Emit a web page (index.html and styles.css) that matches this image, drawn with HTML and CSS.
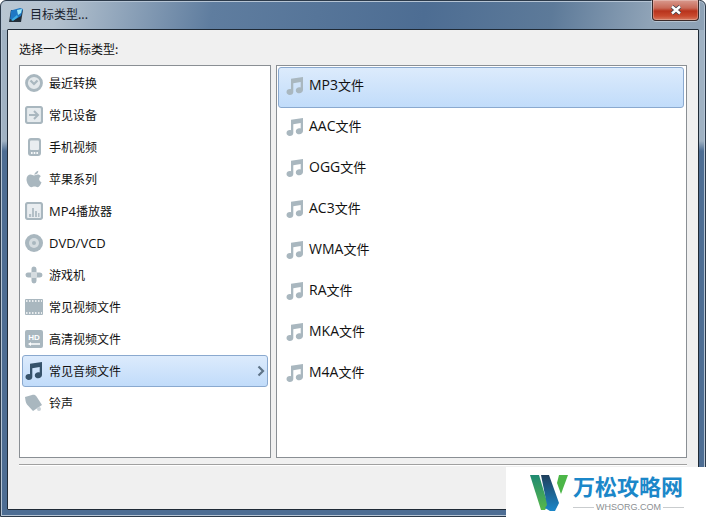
FILE: index.html
```html
<!DOCTYPE html>
<html lang="zh-CN">
<head>
<meta charset="utf-8">
<title>目标类型...</title>
<link rel="stylesheet" href="styles.css">
</head>
<body>
<svg class="defs" width="0" height="0" aria-hidden="true">
  <symbol id="note" viewBox="0 0 17 18">
    <path fill="currentColor" d="M4.500 1.800 16.500 0v13c0 1.900-1.700 3.300-3.700 3.300S9.300 15.200 9.300 13.400s1.600-3.100 3.500-3.100c.6 0 1 .1 1.400.3V5L6.800 6.200V15c0 1.800-1.600 3-3.500 3S0 16.800 0 15.100s1.500-3 3.300-3c.5 0 .9.100 1.200.2z"/>
  </symbol>
</svg>
<div class="window">
  <header class="titlebar">
    <svg class="app-icon" viewBox="0 0 16 16" width="16" height="16">
      <path fill="#232f3a" d="M3 3h12l-2 12H1z"/>
      <path fill="#1f78c4" d="M3 3.500 12 1l3 1-2 7-7 4-4-1z"/>
      <path fill="#9fe8f8" d="M9 3l5-1-1 4-3 2z"/>
      <path fill="#3fb0e6" d="M3 13l6-5 1 2-5 4z"/>
    </svg>
    <span class="title">目标类型...</span>
    <button class="close" aria-label="关闭">
      <svg viewBox="0 0 12 10" width="12" height="10"><path d="M2 1.500 10 8.500M10 1.500 2 8.500" stroke="#39424e" stroke-width="4" fill="none"/><path d="M2 1.500 10 8.500M10 1.500 2 8.500" stroke="#fff" stroke-width="2.400" fill="none"/></svg>
    </button>
  </header>
  <main class="client">
    <p class="prompt">选择一个目标类型:</p>
    <div class="panels">
      <ul class="list cats">
        <li class="cat"><svg class="ic" viewBox="0 0 18 18"><circle cx="9" cy="9" r="7.500" fill="#e3e8eb" stroke="#a9b7bf" stroke-width="2.800"/><path d="M5.500 6.500 9 10l3.500-3.500" fill="none" stroke="#a9b7bf" stroke-width="2.200"/></svg><span class="label">最近转换</span></li>
        <li class="cat"><svg class="ic" viewBox="0 0 18 18"><rect x="1" y="1" width="16" height="16" rx="2" fill="#e6ebee" stroke="#a9b7bf" stroke-width="2.200"/><path d="M4 9h8M9 5l4 4-4 4" fill="none" stroke="#a9b7bf" stroke-width="2"/></svg><span class="label">常见设备</span></li>
        <li class="cat"><svg class="ic" viewBox="0 0 18 18"><rect x="3" y="0" width="13" height="18" rx="3" fill="#a9b7bf"/><rect x="5" y="2.500" width="9" height="9.500" rx="1" fill="#e9edf0"/><circle cx="6.800" cy="15" r="1" fill="#fff"/><circle cx="9.500" cy="15" r="1" fill="#fff"/><circle cx="12.200" cy="15" r="1" fill="#fff"/></svg><span class="label">手机视频</span></li>
        <li class="cat"><svg class="ic" viewBox="0 0 18 18"><path fill="#a9b7bf" d="M9.200 4.700C10 2.800 11.200 1.300 13.300.8c0 2-1.300 3.700-4.100 3.900zM9 5.400c1.300 0 2.300-.8 3.700-.8 1.300 0 2.400.6 3.100 1.600-2.400 1.500-2 4.900.7 6-.8 2.100-2.200 5-3.900 5-1.200 0-1.900-.7-3.100-.7s-2 .7-3.100.7C4.200 17.200 1.500 12.800 1.500 9.500c0-3 2-4.900 4.100-4.900 1.300 0 2.400.8 3.400.8z"/></svg><span class="label">苹果系列</span></li>
        <li class="cat"><svg class="ic" viewBox="0 0 18 18"><rect x="1" y="1" width="16" height="16" rx="2" fill="#e9edf0" stroke="#a9b7bf" stroke-width="2.200"/><path fill="#b4c0c7" d="M4 12h2.200v3H4zM7 6h2v9H7zM10 9h2v6h-2zM13 11h1.500v4H13z"/></svg><span class="label"><span class="lat">MP4</span>播放器</span></li>
        <li class="cat"><svg class="ic" viewBox="0 0 18 18"><circle cx="9" cy="9" r="9" fill="#a9b7bf"/><circle cx="9" cy="9" r="5" fill="#d5dce0"/><circle cx="9" cy="9" r="2" fill="#a9b7bf"/></svg><span class="label"><span class="lat">DVD/VCD</span></span></li>
        <li class="cat"><svg class="ic" viewBox="0 0 18 18"><path fill="#a9b7bf" d="M6.500 3a2.500 2.500 0 0 1 5 0v3.500h-5zM6.500 11.500h5V15a2.500 2.500 0 0 1-5 0zM6.500 6.500v5H3a2.500 2.500 0 0 1 0-5zM11.500 6.500H15a2.500 2.500 0 0 1 0 5h-3.500z"/><circle cx="9" cy="9" r="2.600" fill="#d5dce0"/></svg><span class="label">游戏机</span></li>
        <li class="cat"><svg class="ic" viewBox="0 0 18 18"><rect x="0" y="1" width="18" height="16" rx="1" fill="#a9b7bf"/><path stroke="#fff" stroke-width="1.400" stroke-dasharray="1.500 1.500" d="M1 3h16M1 15h16"/></svg><span class="label">常见视频文件</span></li>
        <li class="cat"><svg class="ic" viewBox="0 0 18 18"><rect x="0" y="0" width="18" height="18" rx="2" fill="#a9b7bf"/><text class="hd" x="9" y="9.500">HD</text><path stroke="#fff" stroke-width="1.500" d="M6 14h9"/><path fill="#fff" d="M3 14l3-2v4z"/></svg><span class="label">高清视频文件</span></li>
        <li class="cat selected"><svg class="ic note-dark"><use href="#note"/></svg><span class="label">常见音频文件</span><svg class="chev" viewBox="0 0 8 12" width="8" height="12"><path d="M1.500 1.500 6 6l-4.500 4.500" fill="none" stroke="#5f7488" stroke-width="2.200"/></svg></li>
        <li class="cat"><svg class="ic" viewBox="0 0 18 18"><path fill="#a9b7bf" d="M0 3 7 1c2-.5 3.500 0 4.500 1.500L17 11l-9 6-6-6.500C1 9 .5 7 .3 5z"/><circle cx="14" cy="15" r="2" fill="#c9d2d8"/></svg><span class="label">铃声</span></li>
      </ul>
      <ul class="list formats">
        <li class="fmt selected"><svg class="ic note"><use href="#note"/></svg><span class="label"><span class="lat">MP3</span>文件</span></li>
        <li class="fmt"><svg class="ic note"><use href="#note"/></svg><span class="label"><span class="lat">AAC</span>文件</span></li>
        <li class="fmt"><svg class="ic note"><use href="#note"/></svg><span class="label"><span class="lat">OGG</span>文件</span></li>
        <li class="fmt"><svg class="ic note"><use href="#note"/></svg><span class="label"><span class="lat">AC3</span>文件</span></li>
        <li class="fmt"><svg class="ic note"><use href="#note"/></svg><span class="label"><span class="lat">WMA</span>文件</span></li>
        <li class="fmt"><svg class="ic note"><use href="#note"/></svg><span class="label"><span class="lat">RA</span>文件</span></li>
        <li class="fmt"><svg class="ic note"><use href="#note"/></svg><span class="label"><span class="lat">MKA</span>文件</span></li>
        <li class="fmt"><svg class="ic note"><use href="#note"/></svg><span class="label"><span class="lat">M4A</span>文件</span></li>
      </ul>
    </div>
    <div class="sep"></div>
  </main>
  <aside class="watermark">
    <svg class="wm-logo" viewBox="0 0 38 36" width="38" height="36"><defs><linearGradient id="wg" x1="0" y1="0" x2="0" y2="1"><stop offset="0" stop-color="#1f3f5c"/><stop offset="1" stop-color="#1b87c9"/></linearGradient><linearGradient id="wl" x1="0" y1="0" x2="0" y2="1"><stop offset="0" stop-color="#1f8a72"/><stop offset="1" stop-color="#58b84a"/></linearGradient></defs><path fill="url(#wl)" d="M0 0h9l9 30-3 5h-4z"/><path fill="url(#wg)" d="M11 0h8l10 28-4 8h-5l-5-3 2-3z"/><path fill="#4cb648" d="M29 0h9l-7 19-4-11z"/></svg>
    <div class="wm-text">
      <div class="wm-name">万松攻略网</div>
      <div class="wm-url"><i class="wm-rule"></i>WHSORG.COM<i class="wm-rule"></i></div>
    </div>
  </aside>
</div>
</body>
</html>
```
FILE: styles.css
```css
* { box-sizing: border-box; }
html, body { margin: 0; padding: 0; }
body {
  width: 706px;
  height: 517px;
  overflow: hidden;
  font: 12px "Noto Sans CJK SC", "Liberation Sans", sans-serif;
  color: #111;
  background: #fff;
}
.defs { position: absolute; }
.window {
  position: relative;
  width: 706px;
  height: 517px;
  padding: 0 6px 6px 6px;
  display: flex;
  flex-direction: column;
  border: 1px solid #2c3a4a;
  border-radius: 6px 6px 0 0;
  box-shadow: inset 0 0 0 1px #b5c4d4;
  background:
    linear-gradient(100deg, #b9c6d2 0, #b4c2cf 8%, #5f7d9f 30%, #4d6d93 60%, #5d7a99 78%, #8fa3b7 92%, #8ea2b6 100%) no-repeat 0 0 / 100% 29px,
    linear-gradient(#a0b2c3 0, #a0b2c3 140px, #4d6d93 150px);
}
.titlebar {
  height: 28px;
  flex: none;
  display: flex;
  align-items: center;
  gap: 6px;
  padding-left: 1px;
}
.app-icon { flex: none; }
.title { font-size: 12px; line-height: 14px; margin-bottom: 3px; color: #1a2330; }
.close {
  position: absolute;
  top: -1px;
  right: 6px;
  width: 47px;
  height: 21px;
  padding: 0;
  display: flex;
  align-items: center;
  justify-content: center;
  border: 1px solid #3a2a2a;
  border-top: 0;
  border-radius: 0 0 4px 4px;
  box-shadow: inset 0 0 0 1px rgba(255,255,255,.25), 0 0 0 1px rgba(255,255,255,.35);
  background: linear-gradient(#d99a8e 0, #c86a58 40%, #b8331c 55%, #c8492e 80%, #d67a60 100%);
}
.client {
  flex: 1;
  display: flex;
  flex-direction: column;
  padding: 10px 11px 0;
  background: #f0f0f0;
  border: 1px solid #1f2a36;
  border-radius: 1px;
  min-height: 0;
}
.prompt {
  margin: 0 0 8px;
  height: 17px;
  line-height: 17px;
  color: #111;
}
.panels {
  display: flex;
  gap: 5px;
  height: 393px;
  flex: none;
}
.list {
  list-style: none;
  margin: 0;
  background: #fff;
  border: 1px solid #8a8f94;
}
.cats {
  width: 252px;
  padding: 1px 2px;
}
.formats {
  width: 411px;
  padding: 1px 2px 1px 1px;
}
.cat, .fmt {
  display: flex;
  align-items: center;
  border: 1px solid transparent;
  border-radius: 3px;
}
.cat {
  height: 32px;
  font-size: 12px;
  padding-left: 2px;
}
.fmt {
  height: 41px;
  font-size: 13px;
  padding: 0 0 3px 7px;
}
.label { line-height: 16px; }
.fmt .label { margin-bottom: 2px; }
.lat { font-family: "Open Sans", sans-serif; font-size: 13px; }
.fmt .lat { font-size: 14px; }
.ic {
  width: 18px;
  height: 18px;
  flex: none;
  margin-right: 5px;
}
.cat .ic { margin-right: 6px; }
.note { color: #a9b7bf; }
.note-dark { color: #37536b; }
.selected {
  border-color: #8aa9cf;
  background: linear-gradient(#dcebfc, #c1dcfa);
}
.chev { margin-left: auto; margin-right: 2px; }
.hd { font: bold 8px "Liberation Sans", sans-serif; fill: #fff; text-anchor: middle; }
.sep {
  margin-top: 6px;
  height: 0;
  border-top: 1px solid #a0a0a0;
  border-bottom: 1px solid #fff;
}
.watermark {
  position: absolute;
  left: 505px;
  top: 466px;
  width: 200px;
  height: 50px;
  background: #fff;
  display: flex;
  align-items: flex-start;
  gap: 5px;
  padding: 6px 0 0 24px;
}
.wm-logo { flex: none; margin-top: 2px; }
.wm-text { display: flex; flex-direction: column; align-items: stretch; width: 111px; }
.wm-name {
  font: 700 22px/24px "Noto Sans CJK SC", sans-serif;
  color: #1b87c9;
  white-space: nowrap;
  margin-bottom: 5px;
}
.wm-url {
  display: flex;
  align-items: center;
  gap: 2px;
  font: 9px/11px "Liberation Sans", sans-serif;
  color: #8b8f93;
}
.wm-rule {
  flex: 1;
  height: 1px;
  background: #c9ccce;
}
```
